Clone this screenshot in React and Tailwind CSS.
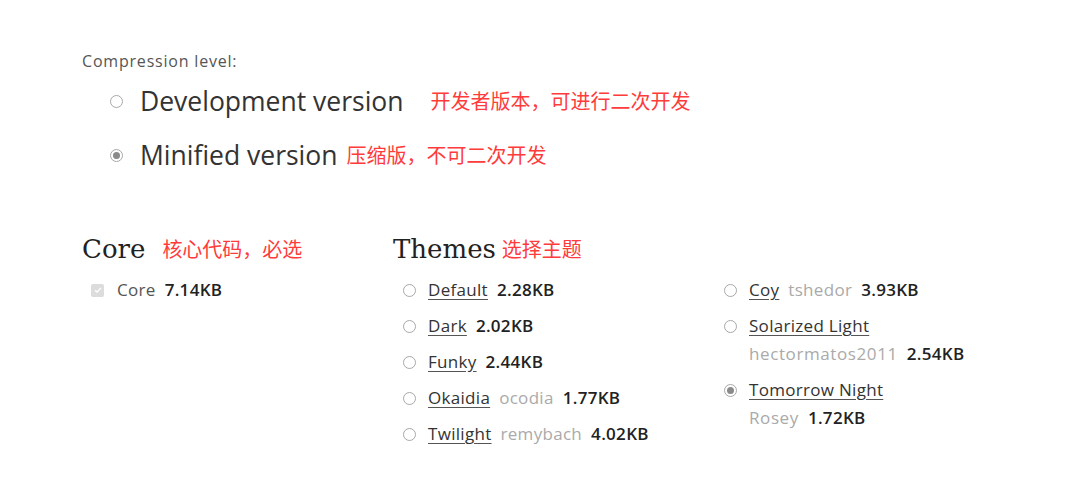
import React from "react";

const sans = "font-['Open_Sans','Noto_Sans_CJK_SC',sans-serif]";
const cjk = "font-['Noto_Sans_CJK_SC',sans-serif] text-[#ff3b3b] tracking-normal";

function Radio({ checked }) {
  return (
    <span className="inline-flex h-[13px] w-[13px] shrink-0 items-center justify-center rounded-full border border-[#a8a8a8] bg-white">
      {checked && <span className="h-[7px] w-[7px] rounded-full bg-[#8a8a8a]" />}
    </span>
  );
}

const themesLeft = [
  { name: "Default", size: "2.28KB" },
  { name: "Dark", size: "2.02KB" },
  { name: "Funky", size: "2.44KB" },
  { name: "Okaidia", owner: "ocodia", size: "1.77KB" },
  { name: "Twilight", owner: "remybach", size: "4.02KB" },
];

const themesRight = [
  { name: "Coy", owner: "tshedor", size: "3.93KB" },
  { name: "Solarized Light", owner: "hectormatos2011", size: "2.54KB", wrap: true },
  { name: "Tomorrow Night", owner: "Rosey", size: "1.72KB", wrap: true, checked: true },
];

function Theme({ t }) {
  return (
    <li className="mb-[8px] flex items-start gap-[12px]">
      <span className="flex h-[28px] items-center">
        <Radio checked={t.checked} />
      </span>
      <div className={t.wrap ? "w-[260px] leading-[28px]" : "leading-[28px]"}>
        <span className="text-[#333] underline decoration-[#555] underline-offset-[3px]">{t.name}</span>
        {t.wrap && <br />}
        {t.owner && <span className={t.wrap ? "tracking-[0.6px] text-[#aaa]" : "ml-[9px] text-[#aaa]"}>{t.owner}</span>}
        <span className="ml-[9px] font-semibold text-[#222]">{t.size}</span>
      </div>
    </li>
  );
}

export default function App() {
  return (
    <div className={`min-h-screen bg-white pl-[82px] pt-[50px] ${sans}`}>
      <p className="text-[16px] leading-[22px] tracking-[0.8px] text-[#555]">Compression level:</p>

      <div className="ml-[28px] mt-[14px] flex flex-col gap-[24px]">
        <label className="flex items-center">
          <Radio />
          <span className="ml-[17px] text-[26.5px] leading-[30px] text-[#333]">Development version</span>
          <span className={`ml-[27px] text-[20px] ${cjk}`}>开发者版本，可进行二次开发</span>
        </label>
        <label className="flex items-center">
          <Radio checked />
          <span className="ml-[17px] text-[26.5px] leading-[30px] text-[#333]">Minified version</span>
          <span className={`ml-[9px] text-[20px] ${cjk}`}>压缩版，不可二次开发</span>
        </label>
      </div>

      <div className="mt-[64px] flex text-[17px] tracking-[0.3px]">
        <section className="w-[311px]">
          <h3 className="flex items-center leading-[30px] tracking-normal">
            <span className="font-['DejaVu_Serif',serif] text-[26px] text-[#222]">Core</span>
            <span className={`ml-[17px] text-[20px] ${cjk}`}>核心代码，必选</span>
          </h3>
          <div className="ml-[9px] mt-[12px] flex items-center leading-[28px]">
            <span className="flex h-[13px] w-[13px] items-center justify-center rounded-[2px] bg-[#dcdcdc]">
              <svg viewBox="0 0 12 12" className="h-[10px] w-[10px]">
                <path d="M2.5 6.2l2.3 2.3 4.7-5" fill="none" stroke="#fff" strokeWidth="1.6" />
              </svg>
            </span>
            <span className="ml-[13px] text-[#555]">Core</span>
            <span className="ml-[9px] font-semibold text-[#222]">7.14KB</span>
          </div>
        </section>

        <section>
          <h3 className="flex items-center leading-[30px] tracking-normal">
            <span className="font-['DejaVu_Serif',serif] text-[26px] text-[#222]">Themes</span>
            <span className={`ml-[6px] text-[20px] ${cjk}`}>选择主题</span>
          </h3>
          <div className="ml-[10px] mt-[12px] flex">
            <ul className="w-[321px]">
              {themesLeft.map((t) => (
                <Theme key={t.name} t={t} />
              ))}
            </ul>
            <ul>
              {themesRight.map((t) => (
                <Theme key={t.name} t={t} />
              ))}
            </ul>
          </div>
        </section>
      </div>
    </div>
  );
}
